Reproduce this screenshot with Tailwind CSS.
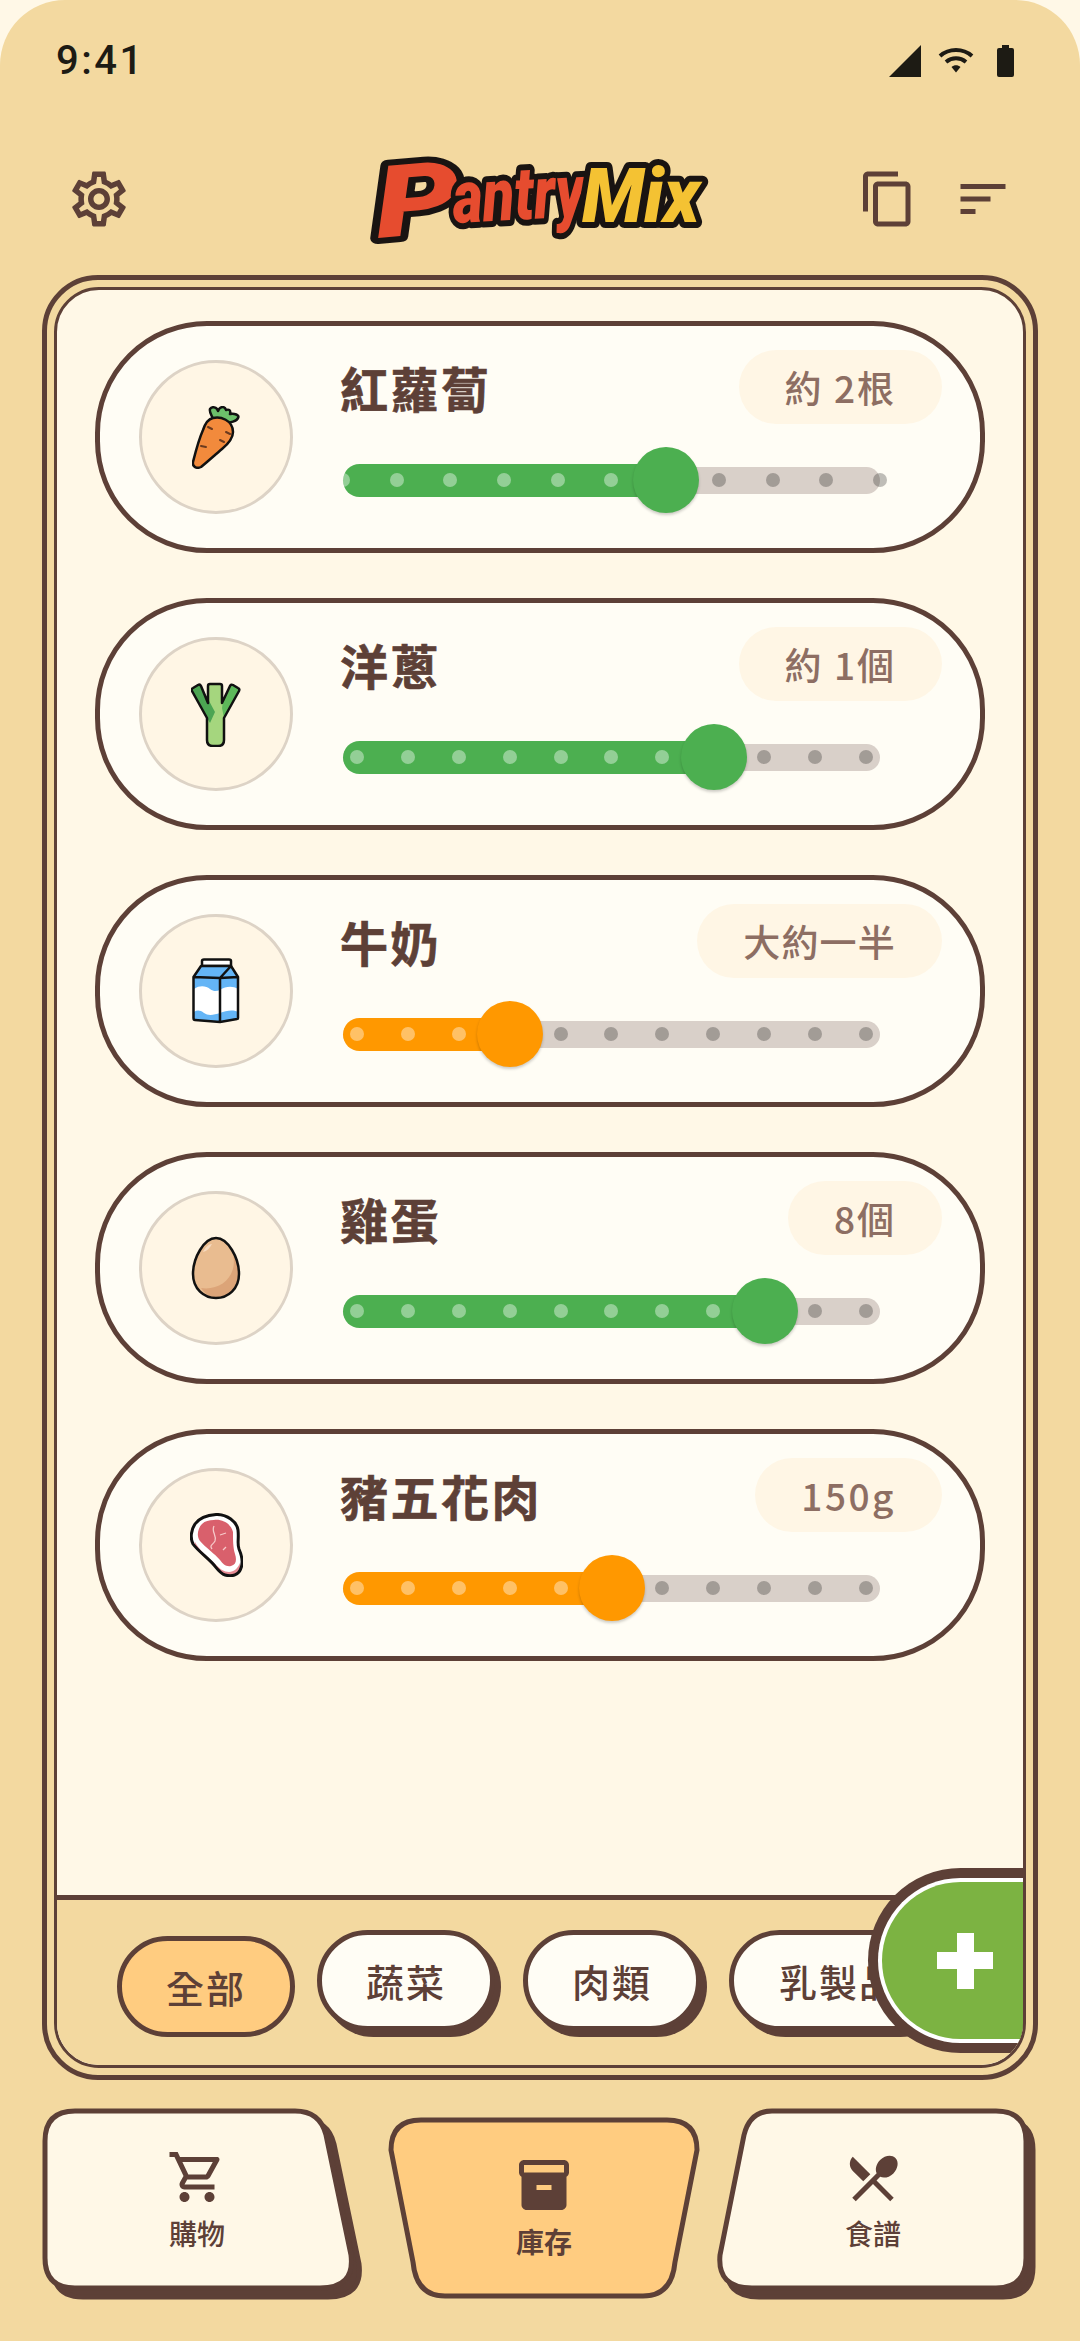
<!DOCTYPE html>
<html lang="zh-Hant">
<head>
<meta charset="utf-8">
<title>PantryMix</title>
<script src="https://cdn.jsdelivr.net/npm/@tailwindcss/browser@4"></script>
</head>
<body class="m-0 bg-[#FFF8E7]">
<div class="relative flex h-[2341px] w-[1080px] flex-col overflow-hidden rounded-t-[65px] bg-[#F3D9A0] font-['Noto_Sans_CJK_TC',sans-serif] text-[#5D4037]">

  <!-- status bar -->
  <div class="flex h-[122px] items-start justify-between pl-[56px] pr-[66px] pt-[37px]">
    <span class="font-['Roboto',sans-serif] text-[40px] font-medium leading-[47px] tracking-[2.5px] text-[#1D1B14]">9:41</span>
    <div class="flex items-start gap-[17px] pt-[8px]">
      <svg class="h-[32px] w-[32px]" viewBox="0 0 32 32"><path d="M0 32 L32 0 V32 Z" fill="#1D1B14"/></svg>
      <svg class="mt-[3px] h-[25px] w-[36px]" viewBox="0 0 36 25" fill="none" stroke="#1D1B14" stroke-width="4"><path d="M2 8 C11 0 25 0 34 8"/><path d="M8 14 C14 9 22 9 28 14"/><path d="M13.5 19 L18 24.5 L22.5 19 C20 16.5 16 16.5 13.5 19 Z" fill="#1D1B14" stroke="none"/></svg>
      <svg class="ml-[6px] h-[32px] w-[17px]" viewBox="0 0 17 32"><path d="M5 0 H12 V3 H15 Q17 3 17 5 V30 Q17 32 15 32 H2 Q0 32 0 30 V5 Q0 3 2 3 H5 Z" fill="#1D1B14"/></svg>
    </div>
  </div>

  <!-- top bar -->
  <div class="flex h-[153px] items-start pl-[66px] pr-[67px]">
    <svg class="mt-[44px] h-[66px] w-[66px]" viewBox="0 0 24 24" fill="#5D4037"><path d="M19.43 12.98c.04-.32.07-.64.07-.98 0-.34-.03-.66-.07-.98l2.11-1.65c.19-.15.24-.42.12-.64l-2-3.46c-.09-.16-.26-.25-.44-.25-.06 0-.12.01-.17.03l-2.49 1c-.52-.4-1.08-.73-1.69-.98l-.38-2.65C14.46 2.18 14.25 2 14 2h-4c-.25 0-.46.18-.49.42l-.38 2.65c-.61.25-1.17.59-1.69.98l-2.49-1c-.06-.02-.12-.03-.18-.03-.17 0-.34.09-.43.25l-2 3.46c-.13.22-.07.49.12.64l2.11 1.65c-.04.32-.07.65-.07.98 0 .33.03.66.07.98l-2.11 1.65c-.19.15-.24.42-.12.64l2 3.46c.09.16.26.25.44.25.06 0 .12-.01.17-.03l2.49-1c.52.4 1.08.73 1.69.98l.38 2.65c.03.24.24.42.49.42h4c.25 0 .46-.18.49-.42l.38-2.65c.61-.25 1.17-.59 1.69-.98l2.49 1c.06.02.12.03.18.03.17 0 .34-.09.43-.25l2-3.46c.12-.22.07-.49-.12-.64l-2.11-1.65zm-1.98-1.71c.04.31.05.52.05.73 0 .21-.02.43-.05.73l-.14 1.13.89.7 1.08.84-.7 1.21-1.27-.51-1.04-.42-.9.68c-.43.32-.84.56-1.25.73l-1.06.43-.16 1.13-.2 1.35h-1.4l-.19-1.35-.16-1.13-1.06-.43c-.43-.18-.83-.41-1.23-.71l-.91-.7-1.06.43-1.27.51-.7-1.21 1.08-.84.89-.7-.14-1.13c-.03-.31-.05-.54-.05-.74s.02-.43.05-.73l.14-1.13-.89-.7-1.08-.84.7-1.21 1.27.51 1.04.42.9-.68c.43-.32.84-.56 1.25-.73l1.06-.43.16-1.13.2-1.35h1.39l.19 1.35.16 1.13 1.06.43c.43.18.83.41 1.23.71l.91.7 1.06-.43 1.27-.51.7 1.21-1.07.85-.89.7.14 1.13zM12 8c-2.21 0-4 1.79-4 4s1.79 4 4 4 4-1.79 4-4-1.79-4-4-4zm0 6c-1.1 0-2-.9-2-2s.9-2 2-2 2 .9 2 2-.9 2-2 2z"/></svg>
    <svg class="ml-[238px] mt-[36px] h-[90px] w-[340px] overflow-visible" viewBox="0 0 340 90" font-family="Roboto, Liberation Sans, sans-serif" font-weight="900" font-style="italic" stroke="#191412" stroke-width="12" stroke-linejoin="round">
      <text x="8" y="80" font-size="100" textLength="84" lengthAdjust="spacingAndGlyphs" fill="#E64C2F" transform="rotate(-5 8 80)" style="paint-order:stroke">P</text>
      <text x="84" y="65" font-size="74" textLength="132" lengthAdjust="spacingAndGlyphs" fill="#E64C2F" transform="rotate(-3 84 65)" style="paint-order:stroke">antry</text>
      <text x="212" y="64" font-size="76" textLength="118" lengthAdjust="spacingAndGlyphs" fill="#F4C233" style="paint-order:stroke">Mix</text>
    </svg>
    <div class="ml-auto mt-[47px] flex gap-[35px]">
      <svg class="h-[60px] w-[60px]" viewBox="0 0 24 24" fill="#5D4037"><path d="M16 1H4c-1.1 0-2 .9-2 2v14h2V3h12V1zm3 4H8c-1.1 0-2 .9-2 2v14c0 1.1.9 2 2 2h11c1.1 0 2-.9 2-2V7c0-1.1-.9-2-2-2zm0 16H8V7h11v14z"/></svg>
      <svg class="h-[60px] w-[60px]" viewBox="0 0 24 24" fill="#5D4037"><path d="M3 18h6v-2H3v2zM3 6v2h18V6H3zm0 7h12v-2H3v2z"/></svg>
    </div>
  </div>

  <!-- framed panel -->
  <div class="mx-[42px] h-[1805px] rounded-[56px] border-[5px] border-[#5D4037] p-[7px]">
    <div class="relative flex h-full flex-col overflow-hidden rounded-[45px] border-[3px] border-[#5D4037] bg-[#FFF8E7]">
      <div class="flex flex-1 flex-col gap-[45px] overflow-hidden px-[38px] pt-[31px]">

        <!-- card 1 -->
        <div class="flex h-[232px] shrink-0 items-start rounded-[112px] border-[5px] border-[#5D4037] bg-[#FFFDF5] pl-[39px] pt-[24px]">
          <div class="mt-[10px] flex h-[154px] w-[154px] shrink-0 items-center justify-center rounded-full border-[3px] border-[#DDD3C6] bg-[#FFF6E5]">
            <svg class="h-[63px] w-[48px]" viewBox="0 0 48 63"><path d="M21 13 C19 8 17 5 18 3 C20 0 25 1 26 5 C28 0 33 0 34 4 C37 3 39 4 38 8 C42 7 48 9 46 12 C45 15 38 17 33 17 Z" fill="#6CBF6A" stroke="#111" stroke-width="2.5" stroke-linejoin="round"/><path d="M21 12 C28 10 41 14 41 26 C41 33 36 38 30 43 C24 48 14 57 9 61 C5 63 0 61 1 56 C3 48 7 33 11 24 C13 18 16 13 21 12Z" fill="#F28A3C" stroke="#111" stroke-width="2.5"/><path d="M16 21 L20 23 M28 34 L32 36 M9 40 L14 41 M34 26 L38 28" stroke="#6B3A1E" stroke-width="2" stroke-linecap="round"/></svg>
          </div>
          <div class="ml-[47px] w-[602px]">
            <div class="flex h-[74px] items-center justify-between">
              <span class="text-[48px] font-bold leading-none tracking-[2.5px] [-webkit-text-stroke:0.6px_#5D4037]">紅蘿蔔</span>
              <span class="flex h-[74px] items-center rounded-full bg-[#FFF6E5] px-[46px] text-[37px] font-medium leading-none tracking-[2px] text-[#8D6E63]">約 2根</span>
            </div>
            <div class="relative ml-[3px] mt-[23px] h-[66px] w-[537px]">
              <div class="absolute left-0 right-0 top-[20px] h-[27px] rounded-full bg-[#D9D0C9]"></div>
              <div class="absolute left-0 top-[17px] h-[33px] w-[323px] rounded-full bg-[#4CAF50]"></div>
              <div class="absolute -left-[7px] -right-[7px] top-[26px] flex justify-between">
                <i class="ml-[7px] h-[14px] w-[7px] rounded-r-full bg-white/40"></i><i class="h-[14px] w-[14px] rounded-full bg-white/40"></i><i class="h-[14px] w-[14px] rounded-full bg-white/40"></i><i class="h-[14px] w-[14px] rounded-full bg-white/40"></i><i class="h-[14px] w-[14px] rounded-full bg-white/40"></i><i class="h-[14px] w-[14px] rounded-full bg-white/40"></i><i class="h-[14px] w-[14px] rounded-full bg-white/40"></i><i class="h-[14px] w-[14px] rounded-full bg-black/25"></i><i class="h-[14px] w-[14px] rounded-full bg-black/25"></i><i class="h-[14px] w-[14px] rounded-full bg-black/25"></i><i class="h-[14px] w-[14px] rounded-full bg-black/25"></i>
              </div>
              <div class="absolute left-[290px] top-0 h-[66px] w-[66px] rounded-full bg-[#4CAF50] shadow-[0_2px_3px_rgba(0,0,0,0.2)]"></div>
            </div>
          </div>
        </div>

        <!-- card 2 -->
        <div class="flex h-[232px] shrink-0 items-start rounded-[112px] border-[5px] border-[#5D4037] bg-[#FFFDF5] pl-[39px] pt-[24px]">
          <div class="mt-[10px] flex h-[154px] w-[154px] shrink-0 items-center justify-center rounded-full border-[3px] border-[#DDD3C6] bg-[#FFF6E5]">
            <svg class="h-[65px] w-[50px]" viewBox="0 0 50 65"><path d="M19 2 H29 Q31 2 31 4 V21 L39 4 Q40 2 42 3 L47 6 Q49 7 48 9 L33 36 V58 Q33 64 27 64 H22 Q16 64 16 58 V36 L1 9 Q0 7 2 6 L7 3 Q9 2 10 4 L17 21 V4 Q17 2 19 2Z" fill="#A5D67E"/><path d="M10 4 L24 30 L19 41 L16 36 L1 9 Q0 7 2 6 L7 3 Q9 2 10 4Z" fill="#4CA553"/><path d="M39 4 L32 20 L31 26 L33 36 L48 9 Q49 7 47 6 L42 3 Q40 2 39 4Z" fill="#5DB85A"/><path d="M19 2 H29 Q31 2 31 4 V21 L39 4 Q40 2 42 3 L47 6 Q49 7 48 9 L33 36 V58 Q33 64 27 64 H22 Q16 64 16 58 V36 L1 9 Q0 7 2 6 L7 3 Q9 2 10 4 L17 21 V4 Q17 2 19 2Z" fill="none" stroke="#111" stroke-width="2.5" stroke-linejoin="round"/></svg>
          </div>
          <div class="ml-[47px] w-[602px]">
            <div class="flex h-[74px] items-center justify-between">
              <span class="text-[48px] font-bold leading-none tracking-[2.5px] [-webkit-text-stroke:0.6px_#5D4037]">洋蔥</span>
              <span class="flex h-[74px] items-center rounded-full bg-[#FFF6E5] px-[46px] text-[37px] font-medium leading-none tracking-[2px] text-[#8D6E63]">約 1個</span>
            </div>
            <div class="relative ml-[3px] mt-[23px] h-[66px] w-[537px]">
              <div class="absolute left-0 right-0 top-[20px] h-[27px] rounded-full bg-[#D9D0C9]"></div>
              <div class="absolute left-0 top-[17px] h-[33px] w-[371px] rounded-full bg-[#4CAF50]"></div>
              <div class="absolute left-[7px] right-[7px] top-[26px] flex justify-between">
                <i class="h-[14px] w-[14px] rounded-full bg-white/40"></i><i class="h-[14px] w-[14px] rounded-full bg-white/40"></i><i class="h-[14px] w-[14px] rounded-full bg-white/40"></i><i class="h-[14px] w-[14px] rounded-full bg-white/40"></i><i class="h-[14px] w-[14px] rounded-full bg-white/40"></i><i class="h-[14px] w-[14px] rounded-full bg-white/40"></i><i class="h-[14px] w-[14px] rounded-full bg-white/40"></i><i class="h-[14px] w-[14px] rounded-full bg-white/40"></i><i class="h-[14px] w-[14px] rounded-full bg-black/25"></i><i class="h-[14px] w-[14px] rounded-full bg-black/25"></i><i class="h-[14px] w-[14px] rounded-full bg-black/25"></i>
              </div>
              <div class="absolute left-[338px] top-0 h-[66px] w-[66px] rounded-full bg-[#4CAF50] shadow-[0_2px_3px_rgba(0,0,0,0.2)]"></div>
            </div>
          </div>
        </div>

        <!-- card 3 -->
        <div class="flex h-[232px] shrink-0 items-start rounded-[112px] border-[5px] border-[#5D4037] bg-[#FFFDF5] pl-[39px] pt-[24px]">
          <div class="mt-[10px] flex h-[154px] w-[154px] shrink-0 items-center justify-center rounded-full border-[3px] border-[#DDD3C6] bg-[#FFF6E5]">
            <svg class="h-[66px] w-[48px]" viewBox="0 0 48 66"><path d="M10 8 V3 Q10 1.5 12 1.5 H37 Q39 1.5 39 3 V8 Z" fill="#fff" stroke="#111" stroke-width="2.5"/><path d="M9 8 H39 L46 19 V60 L28 64 L3 62 Q1.5 62 1.5 60 V19 Z" fill="#64B5F6"/><path d="M2 31 C8 27 14 28 18 31 C22 34 25 33 28 32 C34 28 41 28 46 31 V54 C40 51 34 53 28 55 C22 57 16 58 12 55 C8 52 5 52 2 54 Z" fill="#fff"/><path d="M9 8 H39 L46 19 V60 Q46 61 45 61 L28 64 L3 62 Q1.5 62 1.5 60 V19 Z M1.5 19 L28 20 L39 8 M28 20 V64 M28 20 L46 19" fill="none" stroke="#111" stroke-width="2.5" stroke-linejoin="round"/></svg>
          </div>
          <div class="ml-[47px] w-[602px]">
            <div class="flex h-[74px] items-center justify-between">
              <span class="text-[48px] font-bold leading-none tracking-[2.5px] [-webkit-text-stroke:0.6px_#5D4037]">牛奶</span>
              <span class="flex h-[74px] items-center rounded-full bg-[#FFF6E5] px-[46px] text-[37px] font-medium leading-none tracking-[1.2px] text-[#8D6E63]">大約一半</span>
            </div>
            <div class="relative ml-[3px] mt-[23px] h-[66px] w-[537px]">
              <div class="absolute left-0 right-0 top-[20px] h-[27px] rounded-full bg-[#D9D0C9]"></div>
              <div class="absolute left-0 top-[17px] h-[33px] w-[167px] rounded-full bg-[#FF9800]"></div>
              <div class="absolute left-[7px] right-[7px] top-[26px] flex justify-between">
                <i class="h-[14px] w-[14px] rounded-full bg-white/40"></i><i class="h-[14px] w-[14px] rounded-full bg-white/40"></i><i class="h-[14px] w-[14px] rounded-full bg-white/40"></i><i class="h-[14px] w-[14px] rounded-full bg-white/40"></i><i class="h-[14px] w-[14px] rounded-full bg-black/25"></i><i class="h-[14px] w-[14px] rounded-full bg-black/25"></i><i class="h-[14px] w-[14px] rounded-full bg-black/25"></i><i class="h-[14px] w-[14px] rounded-full bg-black/25"></i><i class="h-[14px] w-[14px] rounded-full bg-black/25"></i><i class="h-[14px] w-[14px] rounded-full bg-black/25"></i><i class="h-[14px] w-[14px] rounded-full bg-black/25"></i>
              </div>
              <div class="absolute left-[134px] top-0 h-[66px] w-[66px] rounded-full bg-[#FF9800] shadow-[0_2px_3px_rgba(0,0,0,0.2)]"></div>
            </div>
          </div>
        </div>

        <!-- card 4 -->
        <div class="flex h-[232px] shrink-0 items-start rounded-[112px] border-[5px] border-[#5D4037] bg-[#FFFDF5] pl-[39px] pt-[24px]">
          <div class="mt-[10px] flex h-[154px] w-[154px] shrink-0 items-center justify-center rounded-full border-[3px] border-[#DDD3C6] bg-[#FFF6E5]">
            <svg class="h-[64px] w-[50px]" viewBox="0 0 50 64"><path d="M25 2 C37 2 48 22 48 38 C48 53 37 62 25 62 C13 62 2 53 2 38 C2 22 13 2 25 2Z" fill="#E9BC90"/><path d="M42 18 C47 40 30 55 10 52 C15 59 20 62 25 62 C37 62 48 53 48 38 C48 31 46 24 42 18Z" fill="#DCA478"/><path d="M12 16 C14 11 18 8 21 8 C19 12 16 15 12 16Z" fill="#F6D9BE"/><path d="M25 2 C37 2 48 22 48 38 C48 53 37 62 25 62 C13 62 2 53 2 38 C2 22 13 2 25 2Z" fill="none" stroke="#111" stroke-width="2.5"/></svg>
          </div>
          <div class="ml-[47px] w-[602px]">
            <div class="flex h-[74px] items-center justify-between">
              <span class="text-[48px] font-bold leading-none tracking-[2.5px] [-webkit-text-stroke:0.6px_#5D4037]">雞蛋</span>
              <span class="flex h-[74px] items-center rounded-full bg-[#FFF6E5] px-[46px] text-[37px] font-medium leading-none tracking-[2px] text-[#8D6E63]">8個</span>
            </div>
            <div class="relative ml-[3px] mt-[23px] h-[66px] w-[537px]">
              <div class="absolute left-0 right-0 top-[20px] h-[27px] rounded-full bg-[#D9D0C9]"></div>
              <div class="absolute left-0 top-[17px] h-[33px] w-[422px] rounded-full bg-[#4CAF50]"></div>
              <div class="absolute left-[7px] right-[7px] top-[26px] flex justify-between">
                <i class="h-[14px] w-[14px] rounded-full bg-white/40"></i><i class="h-[14px] w-[14px] rounded-full bg-white/40"></i><i class="h-[14px] w-[14px] rounded-full bg-white/40"></i><i class="h-[14px] w-[14px] rounded-full bg-white/40"></i><i class="h-[14px] w-[14px] rounded-full bg-white/40"></i><i class="h-[14px] w-[14px] rounded-full bg-white/40"></i><i class="h-[14px] w-[14px] rounded-full bg-white/40"></i><i class="h-[14px] w-[14px] rounded-full bg-white/40"></i><i class="h-[14px] w-[14px] rounded-full bg-white/40"></i><i class="h-[14px] w-[14px] rounded-full bg-black/25"></i><i class="h-[14px] w-[14px] rounded-full bg-black/25"></i>
              </div>
              <div class="absolute left-[389px] top-0 h-[66px] w-[66px] rounded-full bg-[#4CAF50] shadow-[0_2px_3px_rgba(0,0,0,0.2)]"></div>
            </div>
          </div>
        </div>

        <!-- card 5 -->
        <div class="flex h-[232px] shrink-0 items-start rounded-[112px] border-[5px] border-[#5D4037] bg-[#FFFDF5] pl-[39px] pt-[24px]">
          <div class="mt-[10px] flex h-[154px] w-[154px] shrink-0 items-center justify-center rounded-full border-[3px] border-[#DDD3C6] bg-[#FFF6E5]">
            <svg class="h-[64px] w-[53px]" viewBox="0 0 53 64"><path d="M26 1.5 C37 1 47 9 48 17 C49 26 47 31 49 36 C52 43 53 50 51 55 C49 62 42 64 35 62 C31 61 28 57 24 52 C18 45 8 38 3 31 C0 25 1 17 5 11 C10 4 18 2 26 1.5Z" fill="#fff"/><path d="M5 29 C9 37 18 44 25 51 C30 56 34 59 39 59 C44 59 48 55 50 50 C51 54 50 58 47 60 C42 64 35 63 31 60 C25 55 17 46 9 39 C5 36 3 32 5 29Z" fill="#E58A92"/><path d="M24 7 C33 6 41 11 43 19 C43 28 43 34 45 41 C47 47 46 52 41 53 C36 54 33 51 30 47 C25 41 15 34 10 28 C6 23 8 15 12 11 C15 8 19 7 24 7Z" fill="#D9606C"/><path d="M24 13 C21 19 27 22 25 28 C23 32 19 32 22 36 M36 20 L30 22 M36 34 L33 37" fill="none" stroke="#F6C9C9" stroke-width="1.3"/><path d="M26 1.5 C37 1 47 9 48 17 C49 26 47 31 49 36 C52 43 53 50 51 55 C49 62 42 64 35 62 C31 61 28 57 24 52 C18 45 8 38 3 31 C0 25 1 17 5 11 C10 4 18 2 26 1.5Z" fill="none" stroke="#111" stroke-width="3"/></svg>
          </div>
          <div class="ml-[47px] w-[602px]">
            <div class="flex h-[74px] items-center justify-between">
              <span class="text-[48px] font-bold leading-none tracking-[2.5px] [-webkit-text-stroke:0.6px_#5D4037]">豬五花肉</span>
              <span class="flex h-[74px] items-center rounded-full bg-[#FFF6E5] px-[46px] text-[37px] font-medium leading-none tracking-[2.5px] text-[#8D6E63]">150g</span>
            </div>
            <div class="relative ml-[3px] mt-[23px] h-[66px] w-[537px]">
              <div class="absolute left-0 right-0 top-[20px] h-[27px] rounded-full bg-[#D9D0C9]"></div>
              <div class="absolute left-0 top-[17px] h-[33px] w-[269px] rounded-full bg-[#FF9800]"></div>
              <div class="absolute left-[7px] right-[7px] top-[26px] flex justify-between">
                <i class="h-[14px] w-[14px] rounded-full bg-white/40"></i><i class="h-[14px] w-[14px] rounded-full bg-white/40"></i><i class="h-[14px] w-[14px] rounded-full bg-white/40"></i><i class="h-[14px] w-[14px] rounded-full bg-white/40"></i><i class="h-[14px] w-[14px] rounded-full bg-white/40"></i><i class="h-[14px] w-[14px] rounded-full bg-white/40"></i><i class="h-[14px] w-[14px] rounded-full bg-black/25"></i><i class="h-[14px] w-[14px] rounded-full bg-black/25"></i><i class="h-[14px] w-[14px] rounded-full bg-black/25"></i><i class="h-[14px] w-[14px] rounded-full bg-black/25"></i><i class="h-[14px] w-[14px] rounded-full bg-black/25"></i>
              </div>
              <div class="absolute left-[236px] top-0 h-[66px] w-[66px] rounded-full bg-[#FF9800] shadow-[0_2px_3px_rgba(0,0,0,0.2)]"></div>
            </div>
          </div>
        </div>
      </div>

      <!-- filter chips -->
      <div class="flex h-[170px] shrink-0 items-start gap-[28px] overflow-hidden border-t-[5px] border-[#5D4037] bg-[#F3D9A0] pl-[54px] pt-[30px]">
        <span class="flex h-[101px] w-[178px] shrink-0 translate-x-[6px] translate-y-[6px] items-center justify-center rounded-full border-[5px] border-[#5D4037] bg-[#FFCC80] text-[38px] font-medium leading-none tracking-[2px]">全部</span>
        <span class="flex h-[101px] w-[178px] shrink-0 items-center justify-center rounded-full border-[5px] border-[#5D4037] bg-[#FFFDF5] text-[38px] font-medium leading-none tracking-[2px] shadow-[6px_6px_0_#5D4037]">蔬菜</span>
        <span class="flex h-[101px] w-[178px] shrink-0 items-center justify-center rounded-full border-[5px] border-[#5D4037] bg-[#FFFDF5] text-[38px] font-medium leading-none tracking-[2px] shadow-[6px_6px_0_#5D4037]">肉類</span>
        <span class="flex h-[101px] w-[216px] shrink-0 items-center justify-center rounded-full border-[5px] border-[#5D4037] bg-[#FFFDF5] pl-[4px] text-[38px] font-medium leading-none tracking-[2px] shadow-[6px_6px_0_#5D4037]">乳製品</span>
      </div>

      <!-- add button -->
      <div class="absolute left-[811px] top-[1578px] h-[185px] w-[250px] rounded-l-full bg-[#5D4037] py-[10px] pl-[10px]">
        <div class="flex h-full items-center rounded-l-full border-[4px] border-r-0 border-white bg-[#7CB342] pl-[55px]">
          <svg class="h-[56px] w-[56px]" viewBox="0 0 56 56"><path d="M20 0 H37 V19 H56 V36 H37 V56 H20 V36 H0 V19 H20 Z" fill="#fff"/></svg>
        </div>
      </div>
    </div>
  </div>

  <!-- bottom nav -->
  <div class="mt-[28px] flex items-start pl-[42px]">
    <div class="relative h-[189px] w-[318px]">
      <svg class="absolute inset-0 h-full w-full overflow-visible" viewBox="0 0 318 189"><path d="M33 3 H253 Q278 3 284 27 L309 147 Q313 180 278 180 H33 Q3 180 3 150 V33 Q3 3 33 3 Z" fill="#5D4037" stroke="#5D4037" stroke-width="5" transform="translate(8 9)"/><path d="M33 3 H253 Q278 3 284 27 L309 147 Q313 180 278 180 H33 Q3 180 3 150 V33 Q3 3 33 3 Z" fill="#FFF8E7" stroke="#5D4037" stroke-width="5"/></svg>
      <div class="relative flex flex-col items-center pr-[8px] pt-[39px]">
        <svg class="h-[60px] w-[60px]" viewBox="0 0 24 24" fill="#5D4037"><path d="M15.55 13c.75 0 1.41-.41 1.75-1.03l3.58-6.49c.37-.66-.11-1.48-.87-1.48H5.21l-.94-2H1v2h2l3.6 7.59-1.35 2.44C4.52 15.37 5.48 17 7 17h12v-2H7l1.1-2h7.45zM6.16 6h12.15l-2.76 5H8.53L6.16 6zM7 18c-1.1 0-1.99.9-1.99 2S5.9 22 7 22s2-.9 2-2-.9-2-2-2zm10 0c-1.1 0-1.99.9-1.99 2s.89 2 1.99 2 2-.9 2-2-.9-2-2-2z"/></svg>
        <span class="mt-[9px] text-[28px] font-medium leading-[34px]">購物</span>
      </div>
    </div>
    <div class="relative ml-[28px] mt-[9px] h-[182px] w-[312px]">
      <svg class="absolute inset-0 h-full w-full overflow-visible" viewBox="0 0 312 182"><path d="M33 3 H279 Q309 3 309 33 L287 145 Q284 179 255 179 H57 Q28 179 25 145 L3 33 Q3 3 33 3Z" fill="#FFCC80" stroke="#5D4037" stroke-width="5"/></svg>
      <div class="relative flex flex-col items-center pt-[38px]">
        <svg class="h-[60px] w-[60px]" viewBox="0 0 24 24" fill="#5D4037"><path d="M20 2H4c-1 0-2 .9-2 2v3.01c0 .72.43 1.34 1 1.69V20c0 1.1 1.1 2 2 2h14c.9 0 2-.9 2-2V8.7c.57-.35 1-.97 1-1.69V4c0-1.1-1-2-2-2zm-5 12H9v-2h6v2zm5-7H4V4h16v3z"/></svg>
        <span class="mt-[9px] text-[28px] font-bold leading-[34px]">庫存</span>
      </div>
    </div>
    <div class="relative ml-[17px] h-[189px] w-[319px]">
      <svg class="absolute inset-0 h-full w-full overflow-visible" viewBox="0 0 319 189"><path d="M55 3 H279 Q309 3 309 33 V150 Q309 180 279 180 H35 Q0 180 3 147 L27 27 Q33 3 55 3 Z" fill="#5D4037" stroke="#5D4037" stroke-width="5" transform="translate(7 9)"/><path d="M55 3 H279 Q309 3 309 33 V150 Q309 180 279 180 H35 Q0 180 3 147 L27 27 Q33 3 55 3 Z" fill="#FFF8E7" stroke="#5D4037" stroke-width="5"/></svg>
      <div class="relative flex flex-col items-center pr-[7px] pt-[40px]">
        <svg class="h-[60px] w-[60px]" viewBox="0 0 24 24" fill="#5D4037"><path d="M8.1 13.34l2.83-2.83L3.91 3.5c-1.56 1.56-1.56 4.09 0 5.66l4.19 4.18zm6.78-1.81c1.53.71 3.68.21 5.27-1.38 1.91-1.91 2.28-4.65.81-6.12-1.46-1.46-4.2-1.1-6.12.81-1.59 1.59-2.09 3.74-1.38 5.27L3.7 19.87l1.41 1.41L12 14.41l6.88 6.88 1.41-1.41L13.41 13l1.47-1.47z"/></svg>
        <span class="mt-[8px] text-[28px] font-medium leading-[34px]">食譜</span>
      </div>
    </div>
  </div>
</div>
</body>
</html>
